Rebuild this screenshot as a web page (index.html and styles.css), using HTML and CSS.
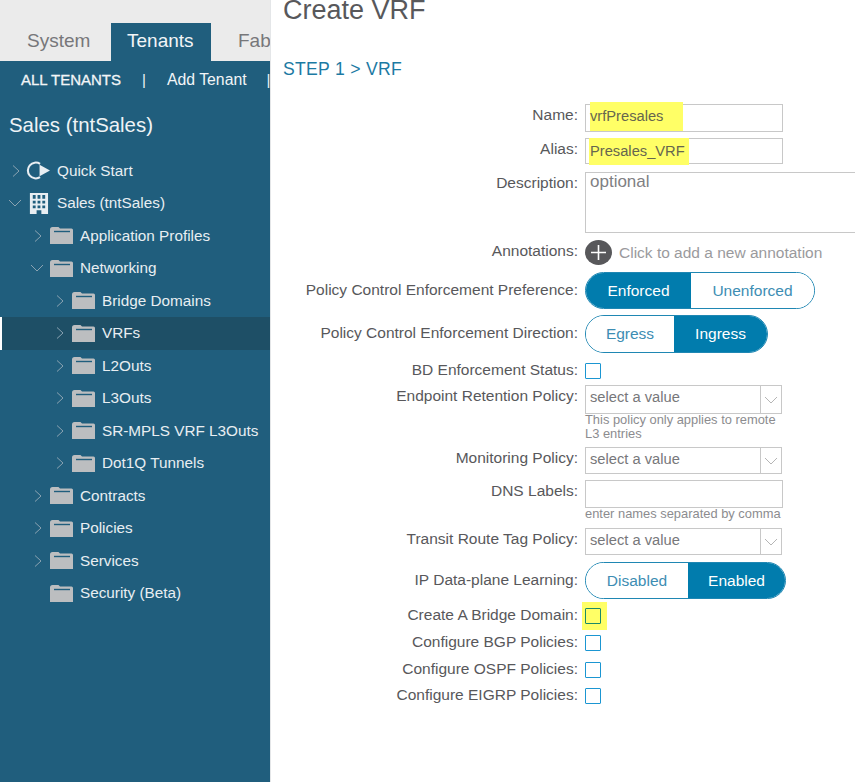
FILE: index.html
```html
<!DOCTYPE html>
<html lang="en">
<head>
<meta charset="utf-8">
<title>Create VRF</title>
<link rel="stylesheet" href="styles.css">
</head>
<body>
<svg class="defs" width="0" height="0" aria-hidden="true">
  <symbol id="folder" viewBox="0 0 23 17">
    <path d="M0 2.5 Q0 0 2.5 0 H8.5 L10 1.5 H21.5 Q23 1.5 23 3 V17 H0 Z" fill="#bcbec0"/>
    <path d="M4 4.5 H20" stroke="#205e7d" stroke-width="1.4"/>
  </symbol>
  <symbol id="right" viewBox="0 0 10 14"><path d="M2 1.5 L8 7 L2 12.5" fill="none" stroke="#8aa3b2" stroke-width="1"/></symbol>
  <symbol id="down" viewBox="0 0 14 10"><path d="M1 2 L7 8 L13 2" fill="none" stroke="#8aa3b2" stroke-width="1"/></symbol>
  <symbol id="sel" viewBox="0 0 14 8"><path d="M1 1 L7 7 L13 1" fill="none" stroke="#b5b5b5" stroke-width="1"/></symbol>
</svg>
<div class="page">
  <aside class="side">
    <nav class="tabs">
      <span class="tab">System</span>
      <span class="tab active">Tenants</span>
      <span class="tab">Fabric</span>
    </nav>
    <div class="subnav">
      <b>ALL TENANTS</b><span class="sep">|</span><span class="add">Add Tenant</span><span class="sep2">|</span>
    </div>
    <h2 class="tenant">Sales (tntSales)</h2>
    <ul class="tree">
      <li class="node l0"><svg class="chev r"><use href="#right"/></svg>
        <svg class="ico" viewBox="0 0 24 20"><path d="M13.5 3.6 A7.6 7.6 0 1 0 13.5 16.4" fill="none" stroke="#e8eef2" stroke-width="2"/><path d="M13 4.5 L23 10 L13 15.5 Z" fill="#e8eef2"/></svg>
        <span>Quick Start</span></li>
      <li class="node l0"><svg class="chev d"><use href="#down"/></svg>
        <svg class="ico" viewBox="0 0 24 22"><path fill-rule="evenodd" fill="#e8eef2" d="M3 0 H22 V22 H15 V18 H10 V22 H3 Z M6 2 V6 H9 V2 Z M11 2 V6 H14 V2 Z M16 2 V6 H19 V2 Z M6 8 V11 H9 V8 Z M11 8 V11 H14 V8 Z M16 8 V11 H19 V8 Z M6 13 V16 H9 V13 Z M11 13 V16 H14 V13 Z M16 13 V16 H19 V13 Z"/></svg>
        <span>Sales (tntSales)</span></li>
      <li class="node l1"><svg class="chev r"><use href="#right"/></svg><svg class="fold"><use href="#folder"/></svg><span>Application Profiles</span></li>
      <li class="node l1"><svg class="chev d"><use href="#down"/></svg><svg class="fold"><use href="#folder"/></svg><span>Networking</span></li>
      <li class="node l2"><svg class="chev r"><use href="#right"/></svg><svg class="fold"><use href="#folder"/></svg><span>Bridge Domains</span></li>
      <li class="node l2 current"><svg class="chev r"><use href="#right"/></svg><svg class="fold"><use href="#folder"/></svg><span>VRFs</span></li>
      <li class="node l2"><svg class="chev r"><use href="#right"/></svg><svg class="fold"><use href="#folder"/></svg><span>L2Outs</span></li>
      <li class="node l2"><svg class="chev r"><use href="#right"/></svg><svg class="fold"><use href="#folder"/></svg><span>L3Outs</span></li>
      <li class="node l2"><svg class="chev r"><use href="#right"/></svg><svg class="fold"><use href="#folder"/></svg><span>SR-MPLS VRF L3Outs</span></li>
      <li class="node l2"><svg class="chev r"><use href="#right"/></svg><svg class="fold"><use href="#folder"/></svg><span>Dot1Q Tunnels</span></li>
      <li class="node l1"><svg class="chev r"><use href="#right"/></svg><svg class="fold"><use href="#folder"/></svg><span>Contracts</span></li>
      <li class="node l1"><svg class="chev r"><use href="#right"/></svg><svg class="fold"><use href="#folder"/></svg><span>Policies</span></li>
      <li class="node l1"><svg class="chev r"><use href="#right"/></svg><svg class="fold"><use href="#folder"/></svg><span>Services</span></li>
      <li class="node l1"><span class="chev blank"></span><svg class="fold"><use href="#folder"/></svg><span>Security (Beta)</span></li>
    </ul>
  </aside>
  <main class="main">
    <h1 class="title">Create VRF</h1>
    <h3 class="step">STEP 1 &gt; VRF</h3>
    <form class="form">
      <div class="row m-name"><label>Name:</label><div class="box h28 w198"><mark class="hl hl-name">vrfPresales</mark></div></div>
      <div class="row m-alias"><label>Alias:</label><div class="box h26 w198"><mark class="hl hl-alias">Presales_VRF</mark></div></div>
      <div class="row m-desc"><label>Description:</label><div class="box h61 wide"><span class="ph big">optional</span></div></div>
      <div class="row m-anno"><label>Annotations:</label>
        <div class="anno"><svg class="plus" viewBox="0 0 27 25"><ellipse cx="13.5" cy="12.5" rx="13.5" ry="12.5" fill="#58585b"/><path d="M13.5 5 V20 M6 12.5 H21" stroke="#fff" stroke-width="1.6"/></svg><span class="ph">Click to add a new annotation</span></div></div>
      <div class="row m-pref"><label class="lt">Policy Control Enforcement Preference:</label>
        <div class="toggle"><span class="on w106">Enforced</span><span class="off w124">Unenforced</span></div></div>
      <div class="row m-dir"><label class="lt">Policy Control Enforcement Direction:</label>
        <div class="toggle"><span class="off w89">Egress</span><span class="on w94">Ingress</span></div></div>
      <div class="row cr m-bd"><label>BD Enforcement Status:</label><span class="check"></span></div>
      <div class="row m-ep"><label>Endpoint Retention Policy:</label>
        <div><div class="select h29"><span class="ph">select a value</span><span class="arrow"><svg><use href="#sel"/></svg></span></div>
        <p class="hint">This policy only applies to remote<br>L3 entries</p></div></div>
      <div class="row m-mon"><label>Monitoring Policy:</label>
        <div class="select h27"><span class="ph">select a value</span><span class="arrow"><svg><use href="#sel"/></svg></span></div></div>
      <div class="row m-dns"><label>DNS Labels:</label>
        <div><div class="box h28 w198"></div><p class="hint">enter names separated by comma</p></div></div>
      <div class="row m-tr"><label>Transit Route Tag Policy:</label>
        <div class="select h27"><span class="ph">select a value</span><span class="arrow"><svg><use href="#sel"/></svg></span></div></div>
      <div class="row m-ip"><label class="lt">IP Data-plane Learning:</label>
        <div class="toggle"><span class="off w102">Disabled</span><span class="on w99">Enabled</span></div></div>
      <div class="row cr m-cb"><label>Create A Bridge Domain:</label><span class="hlbox"><span class="check green"></span></span></div>
      <div class="row cr m-bgp"><label>Configure BGP Policies:</label><span class="check"></span></div>
      <div class="row cr m-ospf"><label>Configure OSPF Policies:</label><span class="check"></span></div>
      <div class="row cr m-eigrp"><label>Configure EIGRP Policies:</label><span class="check"></span></div>
    </form>
  </main>
</div>
</body>
</html>
```

FILE: styles.css
```css
* { box-sizing: border-box; }
html, body { margin: 0; padding: 0; height: 100%; overflow: hidden; background: #fff; }
body { font-family: "Liberation Sans", Arial, sans-serif; color: #58585b; }
.defs { position: absolute; }
.page { display: flex; width: 855px; height: 782px; overflow: hidden; }

.side { flex: 0 0 270px; width: 270px; height: 782px; overflow: hidden; background: #205e7d; color: #e8eef2; }
.tabs { display: flex; height: 61px; padding: 23px 0 0 9px; background: #ebebeb; white-space: nowrap; overflow: hidden; }
.tab { flex: none; height: 38px; line-height: 36px; font-size: 19px; color: #77777a; padding: 0 16px; }
.tab:first-child { width: 102px; padding-left: 18px; }
.tab.active { width: 100px; background: #205e7d; color: #f2f5f7; padding: 0 16px; }
.tab:last-child { padding-left: 27px; }
.subnav { display: flex; height: 37px; align-items: center; padding-left: 21px; font-size: 15px; white-space: nowrap; color: #f2f5f7; }
.subnav b { font-weight: 400; -webkit-text-stroke: 0.3px #f2f5f7; }
.add { font-size: 15.8px; }
.sep { margin: 0 21px; }
.sep2 { margin-left: 20px; }
.tenant { margin: 13px 0 0 9px; font-size: 20.4px; line-height: 28px; font-weight: 400; color: #eef3f6; }
.tree { list-style: none; margin: 15.5px 0 0; padding: 0; font-size: 15.3px; }
.node { display: flex; align-items: center; height: 32.5px; white-space: nowrap; }
.l0 { padding-left: 8px; }
.l1 { padding-left: 30px; }
.l2 { padding-left: 52px; }
.chev { flex: none; display: block; }
.chev.r { width: 10px; height: 14px; margin: 0 7px 0 3px; }
.chev.d { width: 14px; height: 10px; margin: 0 6px 0 0; }
.chev.blank { width: 20px; }
.l0 .chev.r { margin-right: 3px; }
.l0 .chev.d { margin-right: 2px; }
.ico { flex: none; width: 25px; height: 21px; margin-right: 6px; margin-left: 2px; }
.fold { flex: none; width: 23px; height: 17px; margin-right: 7px; }
.current { background: #1e4f66; box-shadow: inset 2px 0 0 #fff; }

.main { flex: 1; min-width: 0; border-left: 1px solid #e4e6e8; position: relative; }
.title { margin: -8px 0 0 12px; font-size: 27px; line-height: 36px; font-weight: 400; color: #58585b; }
.step { margin: 31px 0 0 12px; font-size: 17.6px; line-height: 20px; font-weight: 400; color: #1c7aa3; letter-spacing: .3px; }
.form { font-size: 15.5px; margin-top: 25px; }
.row { display: grid; grid-template-columns: 307px 1fr; column-gap: 7px; align-items: start; }
.row label { text-align: right; white-space: nowrap; line-height: 21px; }
.row .lt { line-height: 36px; }
.row.cr label { line-height: 14px; }
.box { border: 1px solid #c8c8c8; background: #fff; padding-left: 4px; font-size: 14.7px; }
.h28 { height: 28px; } .h27 { height: 27px; } .h26 { height: 26px; } .h29 { height: 29px; } .h61 { height: 61px; }
.w198 { width: 198px; }
.wide { width: 280px; margin-right: -10px; border-right: 0; }
.hl { display: inline-block; background: #ffff66; color: #66664f; line-height: 26px; height: 26px; padding-left: 0; margin-top: -1px; }
.hl-name { width: 93px; height: 29px; line-height: 27px; margin-top: -3px; padding-top: 1px; }
.hl-alias { width: 100px; height: 27px; margin-left: -1px; padding-left: 1px; }
.ph { color: #9a9a9d; }
.big { font-size: 17px; line-height: 17px; display: block; color: #808083; }
.anno { display: flex; align-items: center; gap: 7px; }
.plus { width: 27px; height: 25px; flex: none; }
.toggle { display: inline-flex; height: 37px; width: max-content; border-radius: 19px; overflow: hidden; border: 1px solid #1f87b3; }
.toggle span { display: flex; align-items: center; justify-content: center; }
.on { background: #017cad; color: #fff; }
.off { background: #fff; color: #3d8db3; }
.w106 { width: 105px; } .w124 { width: 123px; } .w89 { width: 88px; } .w94 { width: 93px; }
.w102 { width: 102px; } .w99 { width: 97px; }
.check { display: block; width: 16px; height: 16px; border: 1.5px solid #1b96d2; background: #fff; border-radius: 1px; }
.check.green { border-color: #1b8a68; background: #ffff66; }
.hlbox { display: block; width: 25px; height: 28px; margin: -6px 0 0 -3px; padding: 6px 0 0 3px; background: #ffff66; }
.select { display: flex; width: 197px; border: 1px solid #c8c8c8; padding-left: 4px; font-size: 14.7px; }
.select .ph { flex: 1; color: #77777a; line-height: 23px; }
.arrow { flex: none; width: 21px; border-left: 1px solid #c8c8c8; display: flex; align-items: center; justify-content: center; }
.arrow svg { width: 14px; height: 8px; }
.hint { margin: -1px 0 0; font-size: 12.9px; line-height: 13.5px; color: #8c8c8f; white-space: nowrap; }

.m-name { margin-top: 0; }
.m-alias { margin-top: 6px; }
.m-desc { margin-top: 8px; }
.m-anno { margin-top: 7px; }
.m-pref { margin-top: 7px; }
.m-dir { margin-top: 6px; }
.m-dir .toggle { height: 38px; }
.m-bd { margin-top: 10px; }
.m-ep { margin-top: 6px; }
.m-mon { margin-top: 7px; }
.m-dns { margin-top: 6px; }
.m-tr { margin-top: 7.5px; }
.m-ip { margin-top: 7px; }
.m-cb { margin-top: 9px; }
.m-bgp { margin-top: 5px; }
.m-ospf { margin-top: 11px; }
.m-eigrp { margin-top: 10px; }
```
